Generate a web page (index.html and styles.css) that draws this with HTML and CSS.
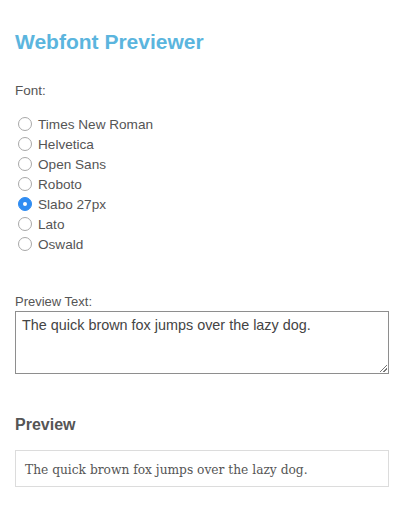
FILE: index.html
```html
<!DOCTYPE html>
<html>
<head>
<meta charset="utf-8">
<link rel="stylesheet" href="styles.css">
</head>
<body>
<main class="app">
  <h1 class="title">Webfont Previewer</h1>
  <div class="field">
    <div class="label">Font:</div>
    <ul class="options">
      <li class="option"><span class="radio"></span>Times New Roman</li>
      <li class="option"><span class="radio"></span>Helvetica</li>
      <li class="option"><span class="radio"></span>Open Sans</li>
      <li class="option"><span class="radio"></span>Roboto</li>
      <li class="option"><span class="radio checked"></span>Slabo 27px</li>
      <li class="option"><span class="radio"></span>Lato</li>
      <li class="option"><span class="radio"></span>Oswald</li>
    </ul>
  </div>
  <div class="field text-field">
    <div class="label small">Preview Text:</div>
    <div class="textarea">The quick brown fox jumps over the lazy dog.<span class="grip"></span></div>
  </div>
  <h2 class="subtitle">Preview</h2>
  <div class="preview">The quick brown fox jumps over the lazy dog.</div>
</main>
</body>
</html>
```
FILE: styles.css
```css
* { box-sizing: border-box; }
html, body { margin: 0; padding: 0; background: #fff; }
body {
  font-family: "Liberation Sans", Arial, sans-serif;
  color: #555;
}
.app {
  padding: 29px 15px 0 15px;
  display: flex;
  flex-direction: column;
}
.title {
  margin: 0;
  font-size: 21px;
  line-height: 26px;
  font-weight: bold;
  color: #5bb5de;
}
.field { margin-top: 28px; }
.label {
  font-size: 13.5px;
  line-height: 16px;
  color: #555;
}
.options {
  list-style: none;
  margin: 15px 0 0 0;
  padding: 0;
  display: flex;
  flex-direction: column;
}
.option {
  display: flex;
  align-items: center;
  height: 20px;
  font-size: 13.6px;
  color: #555;
}
.radio {
  width: 14px;
  height: 14px;
  margin: 0 6px 0 3px;
  border: 1px solid #a8a8a8;
  border-radius: 50%;
  background: #fff;
  display: flex;
  align-items: center;
  justify-content: center;
}
.radio.checked {
  background: #2f8cf2;
  border-color: #2f8cf2;
}
.radio.checked::after {
  content: "";
  width: 4px;
  height: 4px;
  border-radius: 50%;
  background: #fff;
}
.text-field { margin-top: 40px; }
.label.small { font-size: 13px; }
.textarea {
  position: relative;
  margin-top: 1px;
  width: 374px;
  height: 63px;
  border: 1px solid #8e8e8e;
  padding: 5px 6px;
  font-size: 14.4px;
  line-height: 17px;
  color: #444;
}
.grip {
  position: absolute;
  right: 1px;
  bottom: 1px;
  width: 7px;
  height: 7px;
  background: linear-gradient(135deg, transparent 45%, #777 45%, #777 55%, transparent 55%, transparent 70%, #777 70%, #777 80%, transparent 80%);
}
.subtitle {
  margin: 41px 0 0 0;
  font-size: 16px;
  line-height: 20px;
  font-weight: bold;
  color: #555;
}
.preview {
  margin-top: 15px;
  width: 374px;
  height: 37px;
  border: 1px solid #dcdcdc;
  padding: 0 9px;
  display: flex;
  align-items: center;
  font-family: "DejaVu Serif Condensed", "DejaVu Serif", "Liberation Serif", serif;
  font-stretch: condensed;
  font-size: 13.6px;
  color: #555;
}
```
